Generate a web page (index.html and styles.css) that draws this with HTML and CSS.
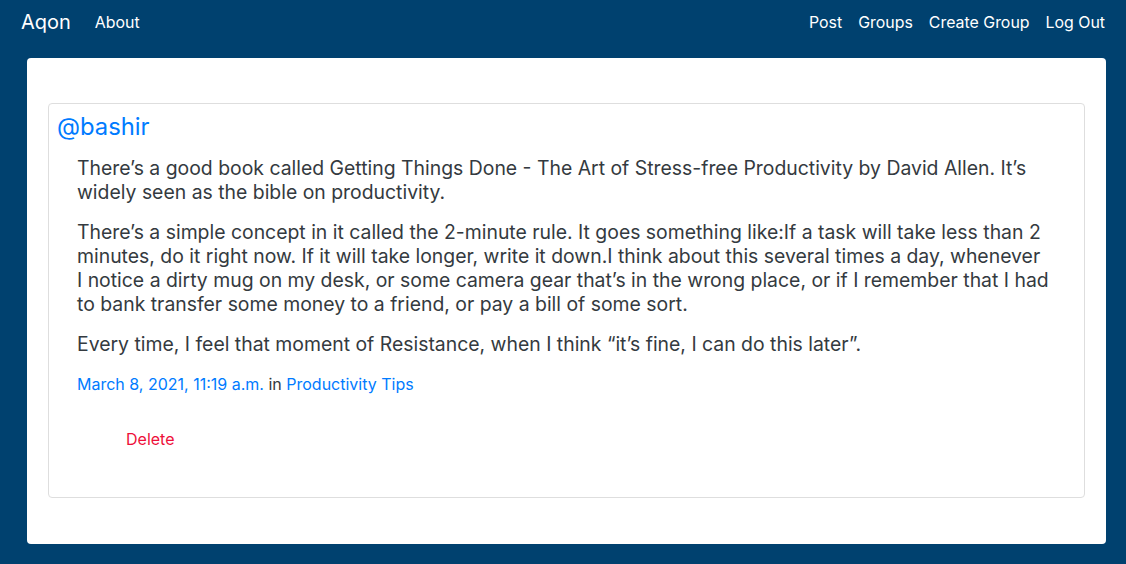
FILE: index.html
```html
<!DOCTYPE html>
<html lang="en">
<head>
<meta charset="utf-8">
<title>Aqon</title>
<link rel="stylesheet" href="styles.css">
</head>
<body>
<nav class="navbar">
  <div class="nav-left">
    <a class="brand" href="#">Aqon</a>
    <a class="nav-link" href="#">About</a>
  </div>
  <div class="nav-right">
    <a class="nav-link" href="#">Post</a>
    <a class="nav-link" href="#">Groups</a>
    <a class="nav-link" href="#">Create Group</a>
    <a class="nav-link" href="#">Log Out</a>
  </div>
</nav>
<main class="page">
  <div class="post">
    <a class="author" href="#">@bashir</a>
    <div class="post-body">
      <p>There’s a good book called Getting Things Done - The Art of Stress-free Productivity by David Allen. It’s widely seen as the bible on productivity.</p>
      <p>There’s a simple concept in it called the 2-minute rule. It goes something like:If a task will take less than 2 minutes, do it right now. If it will take longer, write it down.I think about this several times a day, whenever <span class="nowrap">I notice</span> a dirty mug on my desk, or some camera gear that’s in the wrong place, or if I remember that I had to bank transfer some money to a friend, or pay a bill of some sort.</p>
      <p>Every time, I feel that moment of Resistance, when I think “it’s fine, I can do this later”.</p>
      <div class="meta"><a href="#">March 8, 2021, 11:19 a.m.</a> in <a href="#">Productivity Tips</a></div>
      <div class="actions"><a class="delete" href="#">Delete</a></div>
    </div>
  </div>
</main>
</body>
</html>
```

FILE: styles.css
```css
* { box-sizing: border-box; }
html, body { margin: 0; padding: 0; }
body {
  background: #00416f;
  font-family: "Inter", "Noto Sans", sans-serif;
  color: #343a40;
  height: 564px;
}
a { text-decoration: none; color: #007bff; }
.navbar {
  height: 44px;
  display: flex;
  align-items: center;
  justify-content: space-between;
  padding: 0 13px 0 21px;
}
.nav-left, .nav-right { display: flex; align-items: center; }
.brand {
  color: #fff;
  font-size: 20px;
  margin-right: 16px;
}
.nav-link {
  color: #fff;
  font-size: 15.9px;
  padding: 0 8px;
}
.page {
  background: #fff;
  margin: 14px 20px 0 27px;
  border-radius: 4px;
  padding: 45px 21px 46px 21px;
}
.post {
  border: 1px solid #dedede;
  border-radius: 4px;
  padding: 7px 8px 46px 8px;
}
.author {
  display: block;
  font-size: 23.8px;
  line-height: 32px;
}
.post-body {
  padding: 0 20px;
  margin-top: 13px;
}
.post-body p {
  font-size: 19.4px;
  line-height: 24px;
  margin: 0 0 16px 0;
}
.nowrap { white-space: nowrap; }
.meta {
  font-size: 16px;
  line-height: 24px;
  margin-top: 1px;
}
.actions {
  padding-left: 49px;
  margin-top: 31px;
  font-size: 16px;
  line-height: 24px;
}
.delete { color: #ee0f3a; }
```
